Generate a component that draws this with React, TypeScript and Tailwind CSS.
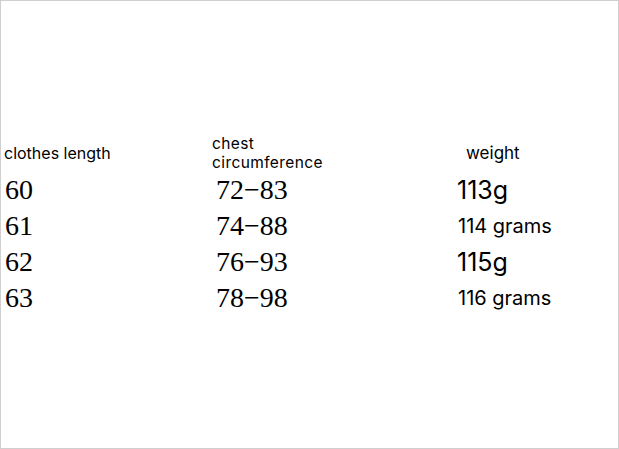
const rows = [
  { len: '60', chest: '72−83', weight: '113g', big: true },
  { len: '61', chest: '74−88', weight: '114 grams', big: false },
  { len: '62', chest: '76−93', weight: '115g', big: true },
  { len: '63', chest: '78−98', weight: '116 grams', big: false },
]

const sans = "font-['Inter','Noto_Sans',sans-serif]"

export default function App() {
  return (
    <div className="w-[619px] h-[449px] bg-white border border-[#cfcfcf] text-black">
      <div className="pt-[133px]">
        {/* header row */}
        <div className={`flex h-[38px] items-center ${sans}`}>
          <div className="w-[207px] pl-[3px] text-[16px] leading-[18px]">clothes length</div>
          <div className="w-[253px] pl-[4px] text-[15.5px] leading-[19px] tracking-[0.4px]">
            <div>chest</div>
            <div>circumference</div>
          </div>
          <div className="pl-[5px] text-[17px] leading-[18px]">weight</div>
        </div>

        {/* data rows */}
        {rows.map((r) => (
          <div key={r.len} className="flex h-[36px] items-center">
            <div className="w-[207px] pl-[4px] font-['Liberation_Serif',serif] text-[28px] leading-none">{r.len}</div>
            <div className="w-[249px] pl-[8px] font-['Liberation_Serif',serif] text-[28px] leading-none">{r.chest}</div>
            <div className={`${sans} leading-none ${r.big ? 'text-[25px]' : 'text-[20px] pl-px'}`}>{r.weight}</div>
          </div>
        ))}
      </div>
    </div>
  )
}
